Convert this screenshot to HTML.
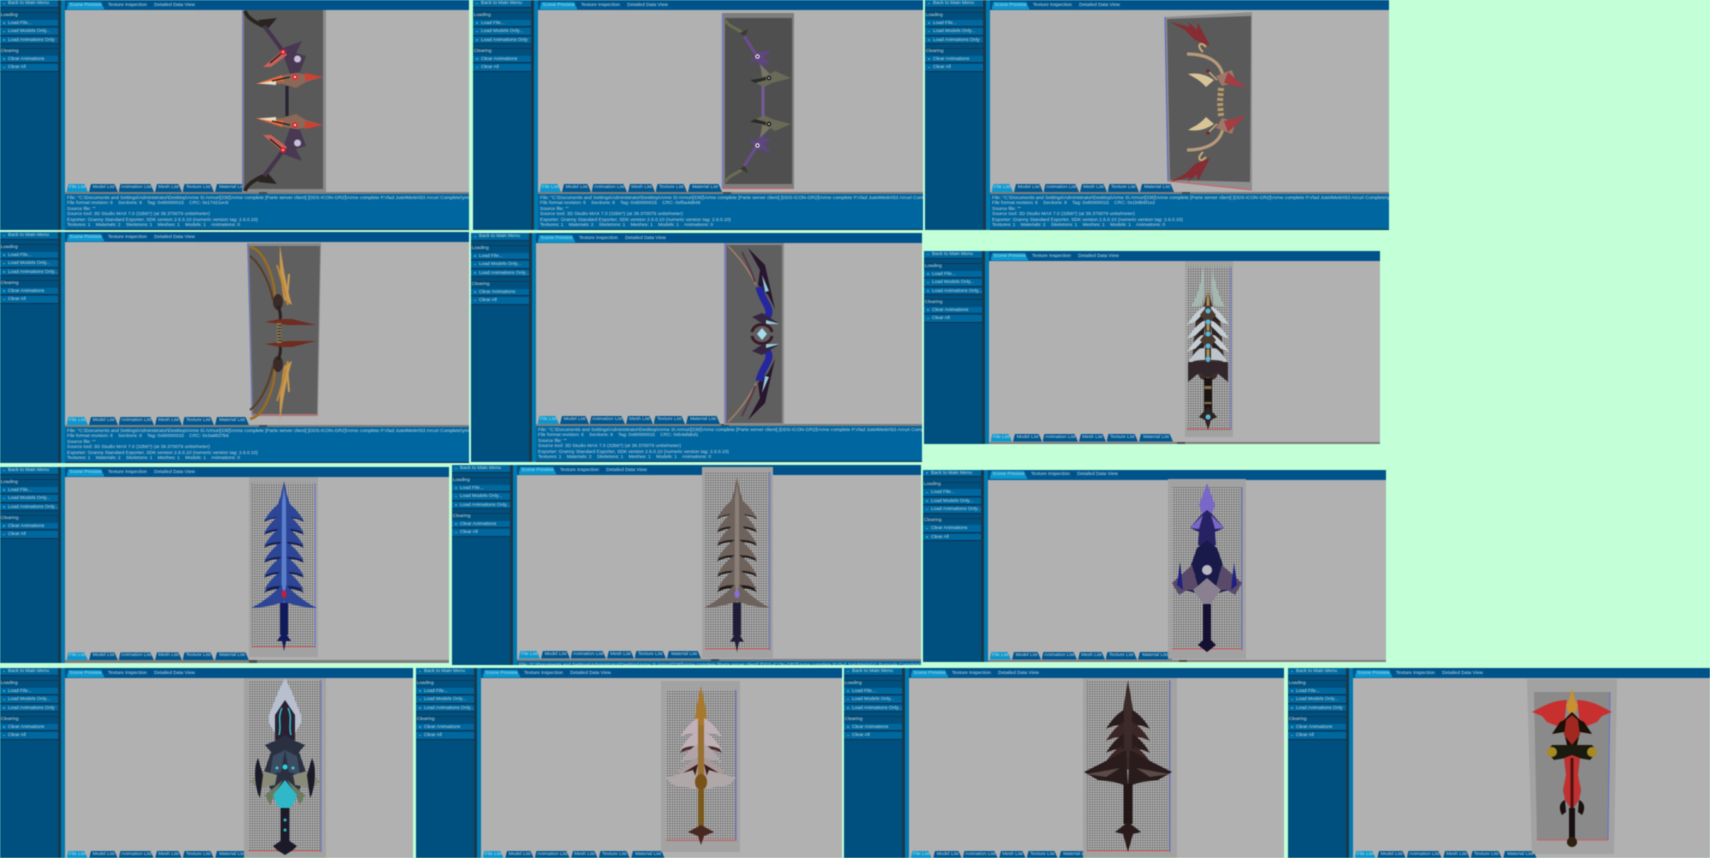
<!DOCTYPE html>
<html><head><meta charset="utf-8"><title>Granny Viewer</title>
<style>
html,body{margin:0;padding:0;background:#c3ffd7;width:1710px;height:858px;overflow:hidden}
#r{position:absolute;left:0;top:0;width:1710px;height:858px;overflow:hidden;filter:blur(.42px);font:4.8px/1 "Liberation Sans",sans-serif;color:#c4d6de}
.p{position:absolute;overflow:hidden;background:#00507f}
.sb{position:absolute;left:0;top:0;width:58px;bottom:0;background:#00507f}
.dk{position:absolute;left:58px;width:2.5px;top:0;bottom:0;background:#19384c}
.st{position:absolute;left:60.5px;width:4.5px;top:0;bottom:0;background:#0079b0}
.tb{position:absolute;left:65px;right:0;top:0;height:10px;background:#00528a}
.v{position:absolute;left:65px;right:0;top:10px;bottom:var(--b);background:#b1b1b1}
.g{position:absolute;left:65px;right:0;height:2.4px;bottom:calc(var(--b) - 2.4px);background:#7e7e7e}
.g:after{content:"";position:absolute;left:48%;width:8px;height:100%;background:#4c4c4c}
.d{position:absolute;left:65px;right:0;bottom:0;top:auto;background:#00669f;border-bottom:1px solid #0d3047;box-sizing:border-box;padding:1.6px 2px 0;white-space:pre;line-height:5.42px;overflow:hidden;height:calc(var(--b) - 2.4px)}
.sb b{position:absolute;left:0;width:58px;height:7.6px;background:#00689f;border-bottom:1px solid #0a3350;font-weight:400;line-height:7.6px;padding-left:8px;box-sizing:border-box;white-space:nowrap;overflow:hidden}
.sb b:before{content:"";position:absolute;left:3.2px;top:2.8px;width:1.6px;height:1.6px;background:#2aa3e0}
.sb em{position:absolute;left:.7px;font-style:normal;white-space:nowrap;padding-top:1px}
.sb hr{position:absolute;left:0;width:58px;height:1px;border:0;margin:0;background:#0c3a58}
.t{position:absolute;height:8px;background:#00568f;line-height:8px;text-align:center;white-space:nowrap;clip-path:polygon(2px 0,calc(100% - 3.5px) 0,100% 100%,0 100%)}
.a{background:#0a97cf}
.top{top:1.5px}
.bot{bottom:var(--b)}
.t1{left:66.5px;width:38px}.t2{left:105px;width:45px}.t3{left:151px;width:47px}
.f1{left:66.5px;width:21.5px}.f2{left:89px;width:29px}.f3{left:118.5px;width:35.5px}.f4{left:155px;width:27px}.f5{left:182.5px;width:31.5px}.f6{left:215px;width:34px}
svg{position:absolute;left:0;top:0}
</style></head><body><div id="r">

<div class="p" style="left:0;top:0;width:469px;height:230px;--b:38px"><div class="sb"><b style="top:0">Back to Main Menu</b><hr style="top:12px"><em style="top:12.5px">Loading</em><b style="top:19.5px">Load File...</b><b style="top:28px">Load Models Only...</b><b style="top:36.5px">Load Animations Only</b><hr style="top:48px"><em style="top:48.5px">Clearing</em><b style="top:55.5px">Clear Animations</b><b style="top:64px">Clear All</b></div><div class="dk"></div><div class="st"></div><div class="tb"></div><div class="v"></div><div class="g"></div><div class="t top a t1">Scene Preview</div><div class="t top t2">Texture Inspection</div><div class="t top t3">Detailed Data View</div><div class="t bot a f1">File List</div><div class="t bot f2">Model List</div><div class="t bot f3">Animation List</div><div class="t bot f4">Mesh List</div><div class="t bot f5">Texture List</div><div class="t bot f6">Material List</div><div class="d">File: "C:\Documents and Settings\Administrator\Desktop\Arme Si Armuri[336]\Arme complete [Parte server client] [DDS-ICON-GR2]\Arme complete P.Vlad Just4Metin\53 Arcuri Complete\ymir work"
File format revision: 6    Sections: 8    Tag: 0x80000015    CRC: 0x17421ecb
Source file: ""
Source tool: 3D Studio MAX 7.0 (32bit?) (at 39.370079 units/meter)
Exporter: Granny Standard Exporter, SDK version 2.6.0.10 (numeric version tag: 2.6.0.10)
Textures: 1    Materials: 2    Skeletons: 1    Meshes: 1    Models: 1    Animations: 0</div></div>

<div class="p" style="left:473px;top:0;width:450px;height:230px;--b:38px"><div class="sb"><b style="top:0">Back to Main Menu</b><hr style="top:12px"><em style="top:12.5px">Loading</em><b style="top:19.5px">Load File...</b><b style="top:28px">Load Models Only...</b><b style="top:36.5px">Load Animations Only</b><hr style="top:48px"><em style="top:48.5px">Clearing</em><b style="top:55.5px">Clear Animations</b><b style="top:64px">Clear All</b></div><div class="dk"></div><div class="st"></div><div class="tb"></div><div class="v"></div><div class="g"></div><div class="t top a t1">Scene Preview</div><div class="t top t2">Texture Inspection</div><div class="t top t3">Detailed Data View</div><div class="t bot a f1">File List</div><div class="t bot f2">Model List</div><div class="t bot f3">Animation List</div><div class="t bot f4">Mesh List</div><div class="t bot f5">Texture List</div><div class="t bot f6">Material List</div><div class="d">File: "C:\Documents and Settings\Administrator\Desktop\Arme Si Armuri[336]\Arme complete [Parte server client] [DDS-ICON-GR2]\Arme complete P.Vlad Just4Metin\53 Arcuri Complete\ymir work"
File format revision: 6    Sections: 8    Tag: 0x80000015    CRC: 0xf5a4d948
Source file: ""
Source tool: 3D Studio MAX 7.0 (32bit?) (at 39.370079 units/meter)
Exporter: Granny Standard Exporter, SDK version 2.6.0.10 (numeric version tag: 2.6.0.10)
Textures: 1    Materials: 2    Skeletons: 1    Meshes: 1    Models: 1    Animations: 0</div></div>

<div class="p" style="left:925px;top:0;width:464px;height:230px;--b:38px"><div class="sb"><b style="top:0">Back to Main Menu</b><hr style="top:12px"><em style="top:12.5px">Loading</em><b style="top:19.5px">Load File...</b><b style="top:28px">Load Models Only...</b><b style="top:36.5px">Load Animations Only</b><hr style="top:48px"><em style="top:48.5px">Clearing</em><b style="top:55.5px">Clear Animations</b><b style="top:64px">Clear All</b></div><div class="dk"></div><div class="st"></div><div class="tb"></div><div class="v"></div><div class="g"></div><div class="t top a t1">Scene Preview</div><div class="t top t2">Texture Inspection</div><div class="t top t3">Detailed Data View</div><div class="t bot a f1">File List</div><div class="t bot f2">Model List</div><div class="t bot f3">Animation List</div><div class="t bot f4">Mesh List</div><div class="t bot f5">Texture List</div><div class="t bot f6">Material List</div><div class="d">File: "C:\Documents and Settings\Administrator\Desktop\Arme Si Armuri[336]\Arme complete [Parte server client] [DDS-ICON-GR2]\Arme complete P.Vlad Just4Metin\53 Arcuri Complete\ymir work"
File format revision: 6    Sections: 8    Tag: 0x80000015    CRC: 0x1b9b6f1e2
Source file: ""
Source tool: 3D Studio MAX 7.0 (32bit?) (at 39.370079 units/meter)
Exporter: Granny Standard Exporter, SDK version 2.6.0.10 (numeric version tag: 2.6.0.10)
Textures: 1    Materials: 2    Skeletons: 1    Meshes: 1    Models: 1    Animations: 0</div></div>

<div class="p" style="left:0;top:232px;width:469px;height:231px;--b:38px"><div class="sb"><b style="top:0">Back to Main Menu</b><hr style="top:12px"><em style="top:12.5px">Loading</em><b style="top:19.5px">Load File...</b><b style="top:28px">Load Models Only...</b><b style="top:36.5px">Load Animations Only...</b><hr style="top:48px"><em style="top:48.5px">Clearing</em><b style="top:55.5px">Clear Animations</b><b style="top:64px">Clear All</b></div><div class="dk"></div><div class="st"></div><div class="tb"></div><div class="v"></div><div class="g"></div><div class="t top a t1">Scene Preview</div><div class="t top t2">Texture Inspection</div><div class="t top t3">Detailed Data View</div><div class="t bot a f1">File List</div><div class="t bot f2">Model List</div><div class="t bot f3">Animation List</div><div class="t bot f4">Mesh List</div><div class="t bot f5">Texture List</div><div class="t bot f6">Material List</div><div class="d">File: "C:\Documents and Settings\Administrator\Desktop\Arme Si Armuri[336]\Arme complete [Parte server client] [DDS-ICON-GR2]\Arme complete P.Vlad Just4Metin\53 Arcuri Complete\ymir work"
File format revision: 6    Sections: 8    Tag: 0x80000015    CRC: 0x3a9837b6
Source file: ""
Source tool: 3D Studio MAX 7.0 (32bit?) (at 39.370079 units/meter)
Exporter: Granny Standard Exporter, SDK version 2.6.0.10 (numeric version tag: 2.6.0.10)
Textures: 1    Materials: 2    Skeletons: 1    Meshes: 1    Models: 1    Animations: 0</div></div>

<div class="p" style="left:471px;top:233px;width:451px;height:229px;--b:38px"><div class="sb"><b style="top:0">Back to Main Menu</b><hr style="top:12px"><em style="top:12.5px">Loading</em><b style="top:19.5px">Load File...</b><b style="top:28px">Load Models Only...</b><b style="top:36.5px">Load Animations Only...</b><hr style="top:48px"><em style="top:48.5px">Clearing</em><b style="top:55.5px">Clear Animations</b><b style="top:64px">Clear All</b></div><div class="dk"></div><div class="st"></div><div class="tb"></div><div class="v"></div><div class="g"></div><div class="t top a t1">Scene Preview</div><div class="t top t2">Texture Inspection</div><div class="t top t3">Detailed Data View</div><div class="t bot a f1">File List</div><div class="t bot f2">Model List</div><div class="t bot f3">Animation List</div><div class="t bot f4">Mesh List</div><div class="t bot f5">Texture List</div><div class="t bot f6">Material List</div><div class="d">File: "C:\Documents and Settings\Administrator\Desktop\Arme Si Armuri[336]\Arme complete [Parte server client] [DDS-ICON-GR2]\Arme complete P.Vlad Just4Metin\53 Arcuri Complete\ymir work"
File format revision: 6    Sections: 8    Tag: 0x80000015    CRC: 0xb4afabd1
Source file: ""
Source tool: 3D Studio MAX 7.0 (32bit?) (at 39.370079 units/meter)
Exporter: Granny Standard Exporter, SDK version 2.6.0.10 (numeric version tag: 2.6.0.10)
Textures: 1    Materials: 2    Skeletons: 1    Meshes: 1    Models: 1    Animations: 0</div></div>

<div class="p" style="left:924px;top:251px;width:456px;height:193px;--b:2.4px"><div class="sb"><b style="top:0">Back to Main Menu</b><hr style="top:12px"><em style="top:12.5px">Loading</em><b style="top:19.5px">Load File...</b><b style="top:28px">Load Models Only...</b><b style="top:36.5px">Load Animations Only...</b><hr style="top:48px"><em style="top:48.5px">Clearing</em><b style="top:55.5px">Clear Animations</b><b style="top:64px">Clear All</b></div><div class="dk"></div><div class="st"></div><div class="tb"></div><div class="v"></div><div class="g"></div><div class="t top a t1">Scene Preview</div><div class="t top t2">Texture Inspection</div><div class="t top t3">Detailed Data View</div><div class="t bot a f1">File List</div><div class="t bot f2">Model List</div><div class="t bot f3">Animation List</div><div class="t bot f4">Mesh List</div><div class="t bot f5">Texture List</div><div class="t bot f6">Material List</div></div>

<div class="p" style="left:0;top:467px;width:449px;height:196px;--b:2.6px"><div class="sb"><b style="top:0">Back to Main Menu</b><hr style="top:12px"><em style="top:12.5px">Loading</em><b style="top:19.5px">Load File...</b><b style="top:28px">Load Models Only...</b><b style="top:36.5px">Load Animations Only...</b><hr style="top:48px"><em style="top:48.5px">Clearing</em><b style="top:55.5px">Clear Animations</b><b style="top:64px">Clear All</b></div><div class="dk"></div><div class="st"></div><div class="tb"></div><div class="v"></div><div class="g"></div><div class="t top a t1">Scene Preview</div><div class="t top t2">Texture Inspection</div><div class="t top t3">Detailed Data View</div><div class="t bot a f1">File List</div><div class="t bot f2">Model List</div><div class="t bot f3">Animation List</div><div class="t bot f4">Mesh List</div><div class="t bot f5">Texture List</div><div class="t bot f6">Material List</div></div>

<div class="p" style="left:452px;top:465px;width:469px;height:200px;--b:6.5px"><div class="sb"><b style="top:0">Back to Main Menu</b><hr style="top:12px"><em style="top:12.5px">Loading</em><b style="top:19.5px">Load File...</b><b style="top:28px">Load Models Only...</b><b style="top:36.5px">Load Animations Only...</b><hr style="top:48px"><em style="top:48.5px">Clearing</em><b style="top:55.5px">Clear Animations</b><b style="top:64px">Clear All</b></div><div class="dk"></div><div class="st"></div><div class="tb"></div><div class="v"></div><div class="g"></div><div class="t top a t1">Scene Preview</div><div class="t top t2">Texture Inspection</div><div class="t top t3">Detailed Data View</div><div class="t bot a f1">File List</div><div class="t bot f2">Model List</div><div class="t bot f3">Animation List</div><div class="t bot f4">Mesh List</div><div class="t bot f5">Texture List</div><div class="t bot f6">Material List</div><div class="d" style="border:0">File: "C:\Documents and Settings\Administrator\Desktop\Arme Si Armuri[336]\Arme complete [Parte server client] [DDS-ICON-GR2]\Arme complete P.Vlad Just4Metin\41 Pumnale Complete\ymir work"</div></div>

<div class="p" style="left:923px;top:469.5px;width:463px;height:192.5px;--b:2.4px"><div class="sb"><b style="top:0">Back to Main Menu</b><hr style="top:12px"><em style="top:12.5px">Loading</em><b style="top:19.5px">Load File...</b><b style="top:28px">Load Models Only...</b><b style="top:36.5px">Load Animations Only...</b><hr style="top:48px"><em style="top:48.5px">Clearing</em><b style="top:55.5px">Clear Animations</b><b style="top:64px">Clear All</b></div><div class="dk"></div><div class="st"></div><div class="tb"></div><div class="v"></div><div class="g"></div><div class="t top a t1">Scene Preview</div><div class="t top t2">Texture Inspection</div><div class="t top t3">Detailed Data View</div><div class="t bot a f1">File List</div><div class="t bot f2">Model List</div><div class="t bot f3">Animation List</div><div class="t bot f4">Mesh List</div><div class="t bot f5">Texture List</div><div class="t bot f6">Material List</div></div>

<div class="p" style="left:0;top:668px;width:413px;height:190px;--b:-1px"><div class="sb"><b style="top:0">Back to Main Menu</b><hr style="top:12px"><em style="top:12.5px">Loading</em><b style="top:19.5px">Load File...</b><b style="top:28px">Load Models Only...</b><b style="top:36.5px">Load Animations Only</b><hr style="top:48px"><em style="top:48.5px">Clearing</em><b style="top:55.5px">Clear Animations</b><b style="top:64px">Clear All</b></div><div class="dk"></div><div class="st"></div><div class="tb"></div><div class="v"></div><div class="t top a t1">Scene Preview</div><div class="t top t2">Texture Inspection</div><div class="t top t3">Detailed Data View</div><div class="t bot a f1">File List</div><div class="t bot f2">Model List</div><div class="t bot f3">Animation List</div><div class="t bot f4">Mesh List</div><div class="t bot f5">Texture List</div><div class="t bot f6">Material List</div></div>

<div class="p" style="left:416px;top:668px;width:425.5px;height:190px;--b:-1px"><div class="sb"><b style="top:0">Back to Main Menu</b><hr style="top:12px"><em style="top:12.5px">Loading</em><b style="top:19.5px">Load File...</b><b style="top:28px">Load Models Only...</b><b style="top:36.5px">Load Animations Only...</b><hr style="top:48px"><em style="top:48.5px">Clearing</em><b style="top:55.5px">Clear Animations</b><b style="top:64px">Clear All</b></div><div class="dk"></div><div class="st"></div><div class="tb"></div><div class="v"></div><div class="t top a t1">Scene Preview</div><div class="t top t2">Texture Inspection</div><div class="t top t3">Detailed Data View</div><div class="t bot a f1">File List</div><div class="t bot f2">Model List</div><div class="t bot f3">Animation List</div><div class="t bot f4">Mesh List</div><div class="t bot f5">Texture List</div><div class="t bot f6">Material List</div></div>

<div class="p" style="left:844px;top:668px;width:440px;height:190px;--b:-1px"><div class="sb"><b style="top:0">Back to Main Menu</b><hr style="top:12px"><em style="top:12.5px">Loading</em><b style="top:19.5px">Load File...</b><b style="top:28px">Load Models Only...</b><b style="top:36.5px">Load Animations Only...</b><hr style="top:48px"><em style="top:48.5px">Clearing</em><b style="top:55.5px">Clear Animations</b><b style="top:64px">Clear All</b></div><div class="dk"></div><div class="st"></div><div class="tb"></div><div class="v"></div><div class="t top a t1">Scene Preview</div><div class="t top t2">Texture Inspection</div><div class="t top t3">Detailed Data View</div><div class="t bot a f1">File List</div><div class="t bot f2">Model List</div><div class="t bot f3">Animation List</div><div class="t bot f4">Mesh List</div><div class="t bot f5">Texture List</div><div class="t bot f6">Material List</div></div>

<div class="p" style="left:1288px;top:668px;width:422px;height:190px;--b:-1px"><div class="sb"><b style="top:0">Back to Main Menu</b><hr style="top:12px"><em style="top:12.5px">Loading</em><b style="top:19.5px">Load File...</b><b style="top:28px">Load Models Only...</b><b style="top:36.5px">Load Animations Only</b><hr style="top:48px"><em style="top:48.5px">Clearing</em><b style="top:55.5px">Clear Animations</b><b style="top:64px">Clear All</b></div><div class="dk"></div><div class="st"></div><div class="tb"></div><div class="v"></div><div class="t top a t1">Scene Preview</div><div class="t top t2">Texture Inspection</div><div class="t top t3">Detailed Data View</div><div class="t bot a f1">File List</div><div class="t bot f2">Model List</div><div class="t bot f3">Animation List</div><div class="t bot f4">Mesh List</div><div class="t bot f5">Texture List</div><div class="t bot f6">Material List</div></div>

<svg width="1710" height="858" viewBox="0 0 1710 858" xmlns="http://www.w3.org/2000/svg">
<defs>
<pattern id="gr" width="2.4" height="2.4" patternUnits="userSpaceOnUse"><rect width="2.4" height="2.4" fill="#c6c6c6"/><rect width=".8" height="2.4" fill="#707070"/><rect width="2.4" height=".8" fill="#707070"/></pattern>
<path id="sp" d="M2 -2C8 1 14 7 20 17C13 13 7 13 2 13Z"/>
<g id="fir">
<path d="M0 0L3 14L7 26L7 118L0 120Z" style="fill:var(--a)"/>
<use href="#sp" y="24" style="fill:var(--b)"/><use href="#sp" y="23" style="fill:var(--a)"/>
<use href="#sp" y="37" style="fill:var(--b)"/><use href="#sp" y="35" style="fill:var(--a)"/>
<use href="#sp" y="50" style="fill:var(--b)"/><use href="#sp" y="48" style="fill:var(--a)"/>
<use href="#sp" y="65" style="fill:var(--b)"/><use href="#sp" y="63" style="fill:var(--a)"/>
<use href="#sp" y="80" style="fill:var(--b)"/><use href="#sp" y="78" style="fill:var(--a)"/>
<use href="#sp" y="95" style="fill:var(--b)"/><use href="#sp" y="92" style="fill:var(--a)"/>
<path d="M0 6L2 20L2.500 112L0 114Z" style="fill:var(--c)"/>
<path d="M2 104C10 112 22 122 33 127C22 127 10 124 4 122L0 124Z" style="fill:var(--a)"/>
<rect x="0" y="122" width="4" height="32" style="fill:var(--h)"/>
<path d="M0 150L7 160L2 160L0 170Z" style="fill:var(--h)"/>
</g>
<g id="s6"><path d="M5 265C6 285 12 298 17 307L6 305C3 290 4 280 5 265Z" fill="#a4b8b0"/><path d="M0 290L4 305L12 318L16 360L8 378L0 382Z" fill="#3a2c28"/><path d="M0 288L1.500 300L1.500 380L0 380Z" fill="#a89058"/><use href="#sp" x="1" y="308" fill="#c4ccd4"/><use href="#sp" x="1" y="322" fill="#c4ccd4"/><use href="#sp" x="1" y="335" fill="#c4ccd4"/><use href="#sp" x="1" y="347" fill="#bcc4cc"/><path d="M3 312L13 322L4 321Z" fill="#2a2020"/><path d="M3 326L13 336L4 335Z" fill="#2a2020"/><path d="M3 339L13 349L4 348Z" fill="#2a2020"/><path d="M0 362L20 362L20 382L8 372L0 378Z" fill="#30262c"/><path d="M0 305L8 315L0 325Z" fill="#4a3a30"/><path d="M0 330L8 340L0 350Z" fill="#4a3a30"/><circle cx="0" cy="311" r="2.500" fill="#5ab8e0"/><circle cx="0" cy="322" r="2.500" fill="#5ab8e0"/><circle cx="0" cy="334" r="2.500" fill="#5ab8e0"/><circle cx="0" cy="346" r="2.500" fill="#5ab8e0"/><circle cx="0" cy="359" r="2.500" fill="#5ab8e0"/><rect x="0" y="378" width="4" height="34" fill="#1c1412"/><rect x="0" y="386" width="3.500" height="3" fill="#8a7050"/><rect x="0" y="402" width="3.500" height="2" fill="#8a7050"/><path d="M0 407L9 417L3 420L0 430Z" fill="#2c2420"/><circle cx="0" cy="417" r="2.500" fill="#5ab8e0"/></g>
<g id="s9"><path d="M0 483L8 505L3 520L0 515Z" fill="#7a68c8"/><path d="M0 510L6 515L17 528L8 532L9 545L0 548Z" fill="#262264"/><path d="M4 515L17 528L8 529Z" fill="#7a68c8"/><path d="M0 540L10 548L16 565L12 575L22 590L4 595L0 600Z" fill="#1a1a4a"/><path d="M15 565L35 583L28 595L20 590L8 590Z" fill="#5a4a6a"/><path d="M27 562L30 585L24 590Z" fill="#202080"/><path d="M0 578L14 590L5 602L0 606Z" fill="#8a8090"/><circle cx="0" cy="570" r="5" fill="#b8b8c4"/><rect x="0" y="604" width="4" height="36" fill="#141030"/><path d="M0 636L9 645L0 652Z" fill="#141030"/></g>
<g id="s10"><path d="M0 678L6 690L16 715L16 723L9 735L0 738Z" fill="#b8c0d0"/><path d="M0 700L10 715L10 740L0 745Z" fill="#2a2030"/><path d="M3 708C8 718 3 725 6 735" fill="none" stroke="#30c0d0" stroke-width="1.500"/><path d="M0 735L8 740L20 745L14 752L22 775L14 790L0 800Z" fill="#2a3040"/><path d="M0 750L12 756L15 775L4 772Z" fill="#3c4c62"/><path d="M8 775L25 770L35 782L26 788L10 785Z" fill="#8a8a78"/><path d="M27 758C32 768 30 790 25 798L22 775Z" fill="#1a1a28"/><path d="M2 780L20 795L15 805L8 790Z" fill="#6a7a60"/><path d="M0 780L12 795L8 805L0 812Z" fill="#30b8c8"/><circle cx="0" cy="767" r="2.500" fill="#30d0d8"/><circle cx="8" cy="768" r="1.500" fill="#30d0d8"/><rect x="0" y="808" width="4.500" height="34" fill="#1c1a28"/><circle cx="0" cy="820" r="1.500" fill="#30b8c8"/><circle cx="0" cy="830" r="1.500" fill="#30b8c8"/><path d="M0 838L12 846L8 850L0 855Z" fill="#1c1a28"/></g>
<g id="s11"><path d="M0 686L4 705L6 718L3 730L0 730Z" fill="#a8782c"/><use href="#sp" x="1" y="720" fill="#c0b0b8"/><use href="#sp" x="1" y="736" fill="#4a2828"/><use href="#sp" x="1" y="733" fill="#c0b0b8"/><use href="#sp" x="1" y="746" fill="#b0a4a8"/><path d="M0 755L25 772L8 778L0 780Z" fill="#a89a9a"/><path d="M3 764L18 773L6 776Z" fill="#3a1c18"/><path d="M8 770L35 778L28 785L10 788L0 790Z" fill="#b0a8a8"/><rect x="0" y="725" width="3" height="60" fill="#9a7030"/><ellipse cx="0" cy="782" rx="6" ry="8" fill="#7a5218"/><rect x="0" y="790" width="3" height="36" fill="#7a5a1c"/><path d="M0 825L13 832L3 836L0 845Z" fill="#4a2820"/></g>
<g id="s12"><path d="M0 680L5 710L7 730L10 760L0 770Z" fill="#3a2a28"/><use href="#sp" x="2" y="712" fill="#2a1c1c"/><use href="#sp" x="2" y="724" fill="#3a2624"/><use href="#sp" x="2" y="736" fill="#2a1c1c"/><use href="#sp" x="4" y="748" fill="#3a2624"/><path d="M2 750L24 762L44 772L30 780L14 782L0 786Z" fill="#2a1c1c"/><path d="M8 768L30 772L42 774L22 777Z" fill="#5a4a48"/><rect x="0" y="784" width="4.500" height="40" fill="#221616"/><path d="M0 822L13 832L5 834L0 852Z" fill="#2a1c1c"/></g>
<g id="s13"><path d="M5 700C20 700 32 708 40 712L30 716L25 722L15 726L8 725Z" fill="#c83030"/><path d="M0 688L3 700L6 705L4 712L0 715Z" fill="#c89030"/><path d="M0 712L8 720L12 722L20 734L8 732L5 745L0 750Z" fill="#1a1008"/><path d="M0 715L6 720L8 735L0 745Z" fill="#a02820"/><path d="M0 745L20 745L25 752L18 760L0 757Z" fill="#1a1a10"/><circle cx="20" cy="752" r="5" fill="#a88a20"/><path d="M0 755L8 758L6 775L9 790L7 800L0 810Z" fill="#c03030"/><path d="M7 800C12 802 14 808 10 815L6 812Z" fill="#1a1010"/><rect x="0" y="758" width="1.500" height="50" fill="#501010"/><rect x="0" y="808" width="3" height="32" fill="#181010"/><circle cx="0" cy="842" r="5" fill="#302010"/></g>
</defs>
<!-- P1 -->
<rect x="242" y="10" width="84" height="182" fill="#8a8a8a"/><rect x="244" y="10" width="79" height="179" fill="#595959"/><path d="M243 10V190" stroke="#6a70c0" stroke-width="1"/>
<g id="b1"><path d="M245 11C247 18 255 22 263 26" fill="none" stroke="#2a2420" stroke-width="3.800"/><path d="M258 20L277 18L266 31Z" fill="#2a2420"/><path d="M264 26C272 36 278 44 284 53" fill="none" stroke="#44344c" stroke-width="4"/><path d="M283 48L302 41L296 53L306 56L300 72L290 74L285 60Z" fill="#493852"/><circle cx="297.500" cy="59" r="3.500" fill="#c8c0d8"/><path d="M263 67L283 50L287 55L271 67Z" fill="#c8625a"/><path d="M270 63L282 53" stroke="#1c1c1c" stroke-width="1.300"/><circle cx="283" cy="52" r="2.800" fill="#e0202c"/><circle cx="283" cy="52" r="1" fill="#fbb"/><path d="M255 84L284 75L296 73L323 77L306 82L296 88L283 84Z" fill="#8e6856"/><path d="M255 84L282 75L284 81Z" fill="#e86a3c"/><path d="M258 83.500L276 80L276 85Z" fill="#e8dcc0"/><path d="M305 73L323 77L305 81Z" fill="#d04030"/><path d="M272 81L290 77" stroke="#1c1c1c" stroke-width="1.200"/><circle cx="295" cy="77" r="2.800" fill="#e8202c"/><circle cx="295" cy="77" r="1.100" fill="#fdd"/><path d="M287 86V101" stroke="#262230" stroke-width="3.200"/></g>
<use href="#b1" transform="matrix(1 0 0 -1 0 202)"/>
<!-- P2 -->
<rect x="722" y="13" width="72" height="176" fill="#7e7e7e"/><rect x="725" y="18" width="67" height="166" fill="#4f4f4f"/><path d="M722.500 13V188" stroke="#7a80c4" stroke-width="1.500"/><path d="M722 188.500H794" stroke="#d06060"/>
<g id="b2"><path d="M725 20C730 28 738 28 745 35" fill="none" stroke="#6c6c52" stroke-width="3"/><path d="M740 33L748 29L745 37Z" fill="#3a3a30"/><path d="M744 36C750 45 755 52 762 66" fill="none" stroke="#6c4c90" stroke-width="3"/><path d="M749 63L756 53L771 50L764 58L771 62L763 64L771 76L761 70L757 60Z" fill="#5f4582"/><circle cx="757.500" cy="56.500" r="2.200" fill="#eee"/><circle cx="757.500" cy="56.500" r="1" fill="#111"/><path d="M760 64L776 80L768 84L762 76Z" fill="#777761"/><path d="M750 80L768 75L775 71L791 78L772 83L764 87Z" fill="#6a6a58"/><path d="M750 80L766 77L766 80L755 83Z" fill="#2a2a2a"/><circle cx="769" cy="78" r="2.200" fill="#111"/><circle cx="769" cy="78" r=".9" fill="#eee"/><path d="M763 86V101" stroke="#775a9a" stroke-width="3"/></g>
<use href="#b2" transform="matrix(1 0 0 -1 0 202)"/>
<!-- P3 -->
<path d="M1165 17L1252 12L1252 190L1168 181Z" fill="#8e8e8e"/><path d="M1167 19L1251 16L1250 182L1170 180Z" fill="#5a5a5a"/><path d="M1165 17L1168 181" stroke="#5560c8"/><path d="M1168 181L1252 190" stroke="#d06060"/>
<g id="b3"><path d="M1170 22L1190 27L1188 22L1197 30L1198 23L1210 46L1195 40L1185 30Z" fill="#862c32"/><path d="M1203 52C1196 46 1200 40 1206 47" fill="none" stroke="#c8a878" stroke-width="2"/><path d="M1187 54C1205 54 1220 60 1223 76" fill="none" stroke="#b89a7c" stroke-width="3.200"/><path d="M1216 76L1232 70L1236 82L1222 86Z" fill="#9c7868"/><path d="M1228 72L1246 88L1224 83Z" fill="#a43c42"/><path d="M1188 74C1200 72 1208 76 1214 80L1206 87C1200 80 1195 78 1188 74Z" fill="#d8c496"/><path d="M1209 72L1217 80" stroke="#c8a878" stroke-width="1.500"/><circle cx="1208" cy="71" r="1.600" fill="#7a2020"/><path d="M1221 88L1220 102" stroke="#b89a68" stroke-width="6" stroke-dasharray="3 2"/></g>
<use href="#b3" transform="matrix(1 0 0 -1 0 204)"/>
<!-- P4 -->
<path d="M247 243H321L318 416H252Z" fill="#8a8a8a"/><path d="M249 246H320L317 414H253Z" fill="#5f5f5f"/><path d="M248 244L252 415" stroke="#6a70c0"/><path d="M252 415.500H318" stroke="#d06060"/>
<g id="b4"><path d="M250 247C265 250 275 280 275 298" fill="none" stroke="#9a6c24" stroke-width="2.500"/><path d="M250 256C262 265 270 285 273 300" fill="none" stroke="#5a3c22" stroke-width="2"/><path d="M280 245C283 265 286 285 292 305L284 300C280 280 279 262 280 245Z" fill="#c89850"/><path d="M277 265C282 280 285 295 288 305" fill="none" stroke="#b88638" stroke-width="2"/><path d="M289 274L287 300" fill="none" stroke="#c89a52" stroke-width="2"/><ellipse cx="278" cy="302" rx="5" ry="8" fill="#3a2a28"/><path d="M278 306C282 315 280 320 279 333" fill="none" stroke="#2a2220" stroke-width="3"/><path d="M265 322L280 319L292 319L316 325L288 325Z" fill="#702c20"/><path d="M279 323V333" stroke="#8a7850" stroke-width="4.500" stroke-dasharray="2 1"/></g>
<use href="#b4" transform="matrix(1 0 0 -1 0 666)"/>
<!-- P5 -->
<rect x="724" y="243" width="60" height="182" fill="#8a8a8a"/><rect x="726" y="245" width="56" height="178" fill="#5f5f5f"/><path d="M725.500 243V424" stroke="#7a80d0" stroke-width="1.500"/>
<g id="b5"><path d="M728 246C740 258 750 272 756 285" fill="none" stroke="#a08068" stroke-width="1.500"/><path d="M742 252C748 265 752 272 755 282" fill="none" stroke="#5a3a4a" stroke-width="2"/><path d="M748 248L765 265L772 296L775 309L768 295L758 285L760 270Z" fill="#28162e"/><path d="M762 275L769 291L765 292Z" fill="#90ccdc"/><path d="M759 287C762 300 769 305 769 312C769 318 762 320 760 318" fill="none" stroke="#26269e" stroke-width="7"/><path d="M752 317L762 313L780 324L762 323Z" fill="#342640"/><path d="M766 320L780 324L766 324Z" fill="#98d0d8"/><path d="M752 332C754 322 770 322 772 332" fill="none" stroke="#3a1a28" stroke-width="3"/><path d="M762 334L757 334L762 328L767 334Z" fill="#a8dcec"/></g>
<use href="#b5" transform="matrix(1 0 0 -1 0 668)"/>
<!-- P6 -->
<rect x="1185" y="261" width="48" height="176" fill="#a2a2a2"/><rect x="1187" y="267" width="44" height="163" fill="url(#gr)"/><path d="M1231 267V430" stroke="#6670c8"/><path d="M1187 429H1231" stroke="#d06060"/>
<use href="#s6" transform="translate(1208)"/><use href="#s6" transform="translate(1208) scale(-1 1)"/>
<!-- P7 -->
<rect x="249" y="477" width="69" height="180" fill="#a2a2a2"/><rect x="252" y="483" width="63" height="165" fill="url(#gr)"/><path d="M315 483V648" stroke="#6670c8"/><path d="M252 647H315" stroke="#d06060"/>
<g style="--a:#2c4596;--b:#141e50;--c:#5a80cc;--h:#111a5a"><use href="#fir" transform="translate(284 481)"/><use href="#fir" transform="translate(284 481) scale(-1 1)"/></g>
<ellipse cx="284" cy="594" rx="2.500" ry="4" fill="#c02040"/>
<!-- P8 -->
<rect x="702" y="467" width="71" height="191" fill="#a2a2a2"/><rect x="705" y="472" width="65" height="178" fill="url(#gr)"/><path d="M770 472V650" stroke="#6670c8"/><path d="M705 649H770" stroke="#d06060"/>
<g style="--a:#6e625c;--b:#221a18;--c:#8a8078;--h:#1e1c36"><use href="#fir" transform="translate(737 477) scale(1 1.030)"/><use href="#fir" transform="translate(737 477) scale(-1 1.030)"/></g>
<ellipse cx="737" cy="594" rx="2.500" ry="4" fill="#8870d8"/>
<!-- P9 -->
<rect x="1168" y="479" width="78" height="180" fill="#a2a2a2"/><rect x="1172" y="487" width="70" height="163" fill="url(#gr)"/><path d="M1242 487V650" stroke="#6670c8"/><path d="M1172 649H1242" stroke="#d06060"/>
<use href="#s9" transform="translate(1207)"/><use href="#s9" transform="translate(1207) scale(-1 1)"/>
<!-- P10 -->
<rect x="244" y="678" width="82" height="180" fill="#a2a2a2"/><rect x="248" y="680" width="73" height="172" fill="url(#gr)"/><path d="M321 680V852" stroke="#6670c8"/><path d="M248 851H321" stroke="#d06060"/>
<use href="#s10" transform="translate(285)"/><use href="#s10" transform="translate(285) scale(-1 1)"/>
<!-- P11 -->
<rect x="661" y="681" width="79" height="171" fill="#a2a2a2"/><rect x="666" y="690" width="70" height="151" fill="url(#gr)"/><path d="M736 690V841" stroke="#6670c8"/><path d="M666 840H736" stroke="#d06060"/>
<use href="#s11" transform="translate(701)"/><use href="#s11" transform="translate(701) scale(-1 1)"/>
<!-- P12 -->
<rect x="1083" y="678" width="94" height="180" fill="#a2a2a2"/><rect x="1087" y="680" width="83" height="172" fill="url(#gr)"/><path d="M1170 680V852" stroke="#6670c8"/><path d="M1087 851H1170" stroke="#d06060"/>
<use href="#s12" transform="translate(1128)"/><use href="#s12" transform="translate(1128) scale(-1 1)"/>
<!-- P13 -->
<path d="M1527 679H1617L1614 854H1532Z" fill="#a2a2a2"/><path d="M1534 692H1610L1608 840H1537Z" fill="#8a8a8a"/><path d="M1610 692L1608 840" stroke="#6670c8"/><path d="M1537 840H1608" stroke="#d06060"/>
<use href="#s13" transform="translate(1572)"/><use href="#s13" transform="translate(1572) scale(-1 1)"/>
</svg>
</div></body></html>
